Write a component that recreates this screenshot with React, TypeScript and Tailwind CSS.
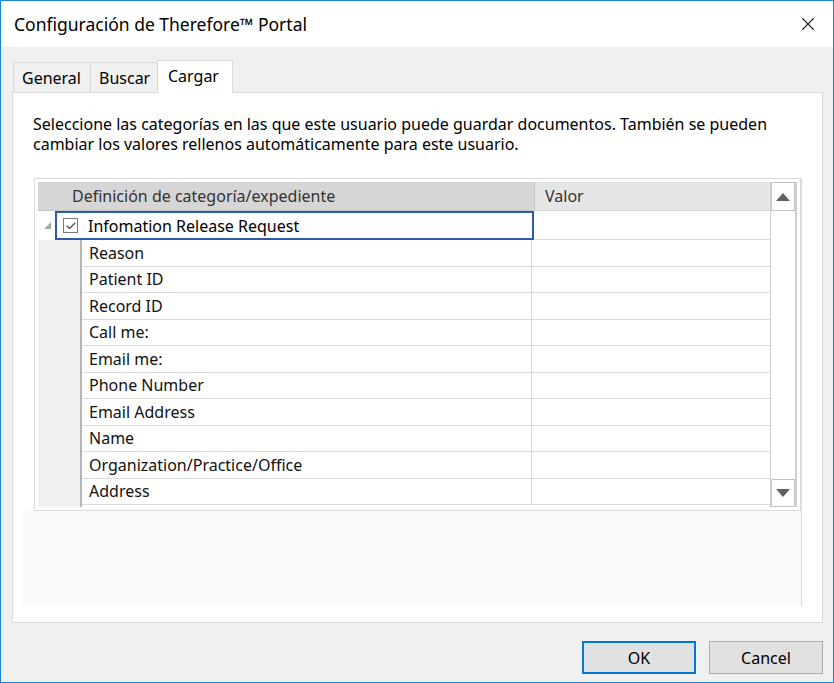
import { Check, X } from 'lucide-react';

const fields = [
  'Reason',
  'Patient ID',
  'Record ID',
  'Call me:',
  'Email me:',
  'Phone Number',
  'Email Address',
  'Name',
  'Organization/Practice/Office',
  'Address',
];

function Tab({ label, active, width }: { label: string; active?: boolean; width: string }) {
  if (active) {
    return (
      <div
        className={`${width} h-[33px] -mb-px bg-white border border-b-0 border-[#d9d9d9] flex items-center pl-[10px] pb-[2px] text-[16px] relative z-10`}
      >
        {label}
      </div>
    );
  }
  return (
    <div
      className={`${width} h-[30px] bg-[#f0f0f0] border border-b-0 border-[#d9d9d9] -mr-px flex items-center pl-[8px] pt-[1px] text-[16px]`}
    >
      {label}
    </div>
  );
}

export default function App() {
  return (
    <div
      className="w-[834px] h-[683px] border border-[#1883d7] bg-[#f0f0f0] flex flex-col text-[#000] overflow-hidden"
      style={{ fontFamily: '"Noto Sans", "Segoe UI", sans-serif' }}
    >
      {/* title bar */}
      <div className="h-[46px] bg-white flex items-center justify-between pl-[13px] pr-[14px] shrink-0">
        <span className="text-[17.5px]">Configuración de Therefore™ Portal</span>
        <X className="w-[22px] h-[22px] text-[#222]" strokeWidth={1.2} />
      </div>

      <div className="pl-[11px] pr-[10px] pt-[13px] flex flex-col">
        {/* tabs */}
        <div className="flex items-end h-[32px] pl-[1px]">
          <Tab label="General" width="w-[78px]" />
          <Tab label="Buscar" width="w-[68px]" />
          <Tab label="Cargar" width="w-[76px]" active />
        </div>

        {/* tab panel */}
        <div className="w-[811px] h-[531px] bg-white border border-[#d9d9d9] flex flex-col">
          <p className="pl-[20px] pt-[21px] pr-[4px] text-[16px] leading-[20px] whitespace-nowrap">
            Seleccione las categorías en las que este usuario puede guardar documentos. También se pueden
            <br />
            cambiar los valores rellenos automáticamente para este usuario.
          </p>

          <div className="ml-[8px] mt-[24px] w-[781px] h-[428px] border-r border-[#dedede] flex flex-col">
            {/* grid */}
            <div className="ml-[13px] w-[767px] h-[333px] border border-[#dadada] p-[3px] flex shrink-0">
              <div className="flex-1 flex flex-col">
                {/* header */}
                <div className="flex h-[29px] text-[16px] text-[#333]">
                  <div className="w-[496px] bg-[#d6d6d6] border-b border-[#c4c4c4] flex items-center pl-[34px]">
                    Definición de categoría/expediente
                  </div>
                  <div className="flex-1 bg-[#e6e6e6] border-l border-[#c8c8c8] border-b border-b-[#d8d8d8] flex items-center pl-[10px]">
                    Valor
                  </div>
                </div>

                {/* parent row */}
                <div className="flex h-[29px] text-[16px]">
                  <div className="w-[17px] flex items-center justify-center pl-[2px]">
                    <svg width="7" height="7" viewBox="0 0 7 7">
                      <path d="M7 0 L7 7 L0 7 Z" fill="#a6a6a6" />
                    </svg>
                  </div>
                  <div className="w-[479px] border-2 border-[#2d5ba8] flex items-center pl-[6px] gap-[10px]">
                    <div className="w-[15px] h-[15px] border border-[#7a7a7a] bg-white flex items-center justify-center">
                      <Check className="w-[12px] h-[12px] text-[#444]" strokeWidth={2.2} />
                    </div>
                    <span>Infomation Release Request</span>
                  </div>
                  <div className="flex-1 border-b border-[#dadada]" />
                </div>

                {/* sub rows */}
                <div className="flex flex-1">
                  <div className="w-[44px] bg-[#f0f0f0] border-r-2 border-[#b5b5b5]" />
                  <div className="flex-1 flex flex-col">
                    {fields.map((f) => (
                      <div key={f} className="flex h-[26.5px] border-b border-[#dadada] text-[16px] text-[#111]">
                        <div className="w-[450px] border-r border-[#dadada] flex items-center pl-[7px]">{f}</div>
                        <div className="flex-1" />
                      </div>
                    ))}
                  </div>
                </div>
              </div>

              {/* scrollbar */}
              <div className="w-[27px] flex flex-col border-l border-[#d0d0d0] border-r-2 border-r-[#cfcfcf]">
                <div className="h-[29px] border border-[#c4c4c4] bg-white flex items-center justify-center">
                  <svg width="14" height="8" viewBox="0 0 14 8">
                    <path d="M7 0 L14 8 L0 8 Z" fill="#606060" />
                  </svg>
                </div>
                <div className="flex-1 bg-white" />
                <div className="h-[28px] border border-[#c4c4c4] bg-white flex items-center justify-center">
                  <svg width="14" height="8" viewBox="0 0 14 8">
                    <path d="M0 0 L14 0 L7 8 Z" fill="#606060" />
                  </svg>
                </div>
              </div>
            </div>
            <div className="flex-1 bg-[#fafafa]" />
          </div>
        </div>

        {/* buttons */}
        <div className="flex justify-end gap-[13px] mt-[18px]">
          <button className="w-[114px] h-[33px] bg-[#e1e1e1] border-2 border-[#0078d7] text-[16px]">OK</button>
          <button className="w-[114px] h-[33px] bg-[#e1e1e1] border border-[#adadad] text-[16px]">Cancel</button>
        </div>
      </div>
    </div>
  );
}
